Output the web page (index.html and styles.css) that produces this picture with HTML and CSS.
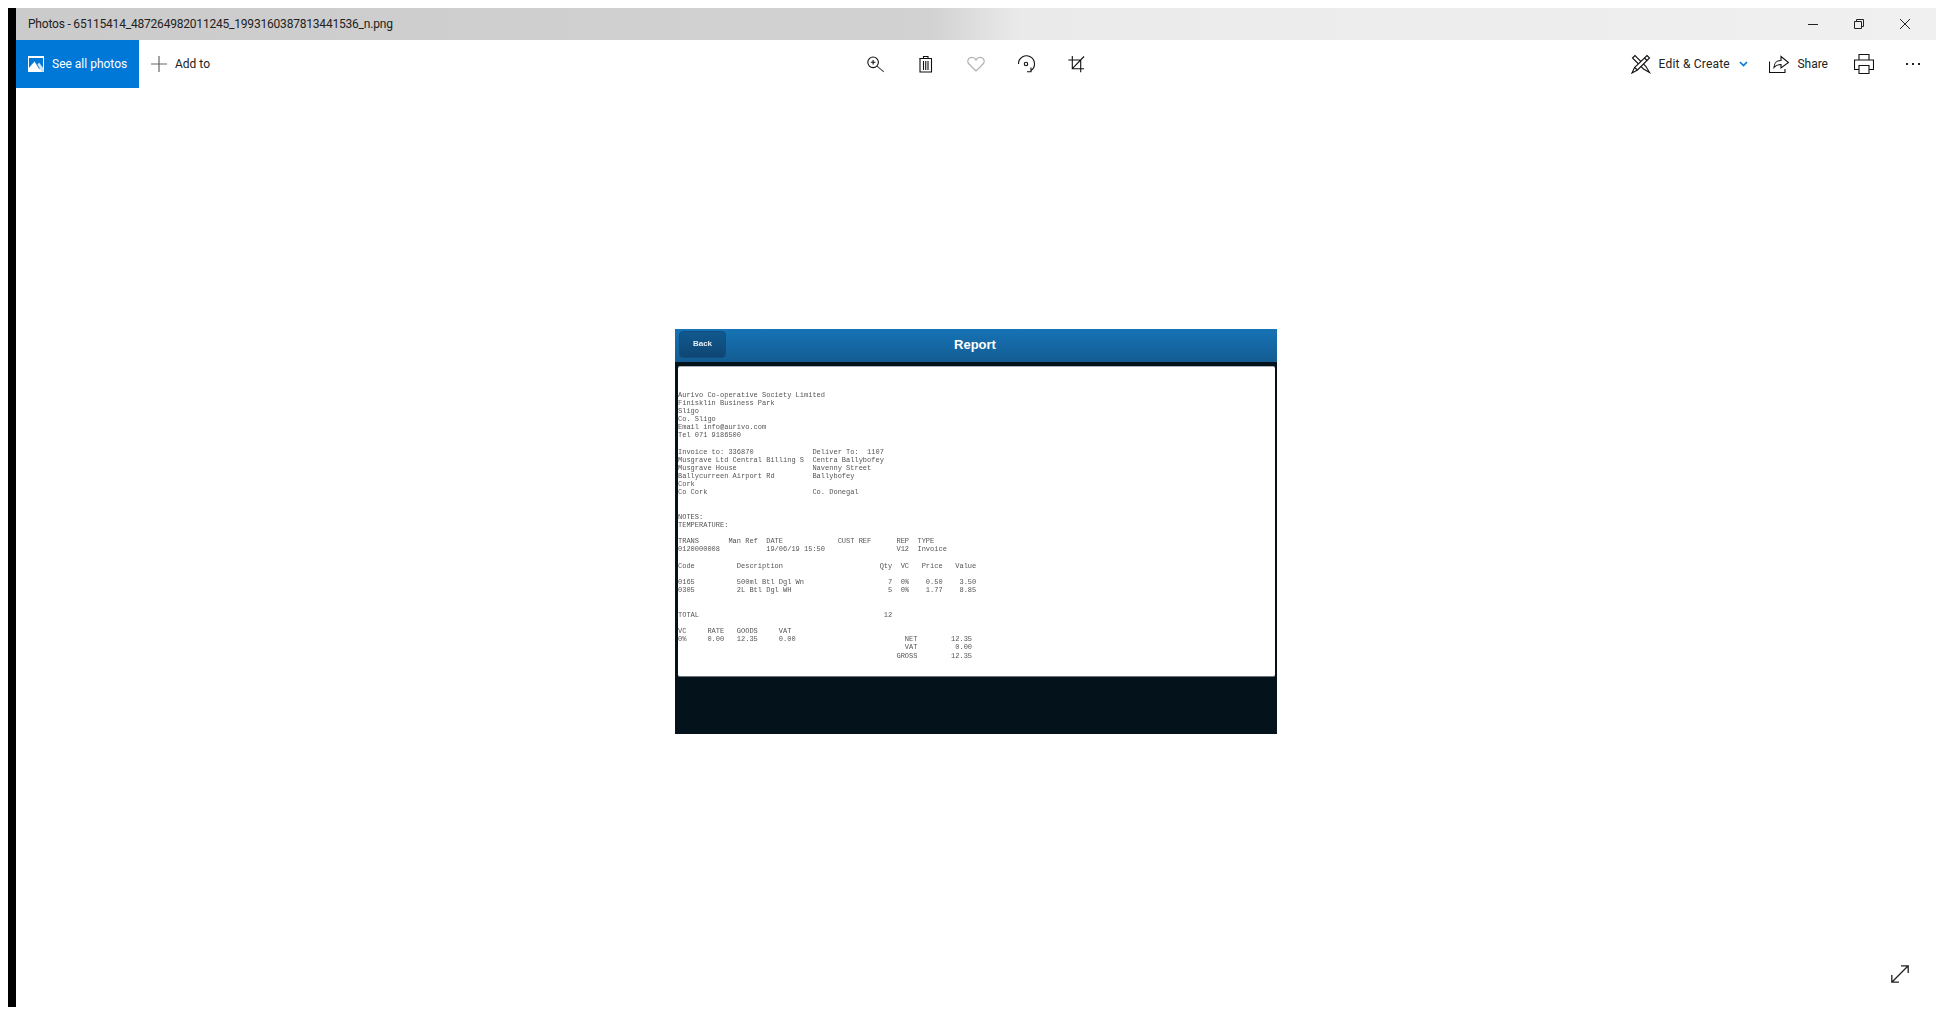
FILE: index.html
```html
<!DOCTYPE html>
<html lang="en">
<head>
<meta charset="utf-8">
<title>Photos</title>
<link rel="stylesheet" href="styles.css">
</head>
<body>
<div class="window">
  <header class="titlebar">
    <span class="title">Photos - 65115414_487264982011245_1993160387813441536_n.png</span>
    <div class="winctrls">
      <svg class="ic12" viewBox="0 0 12 12"><path d="M1 6.500h10" class="s1"/></svg>
      <svg class="ic12" viewBox="0 0 12 12"><path d="M1.500 3.500h7v7h-7zM3.500 3.500v-2h7v7h-2" class="s1"/></svg>
      <svg class="ic12" viewBox="0 0 12 12"><path d="M1 1l10 10M11 1L1 11" class="s1"/></svg>
    </div>
  </header>
  <nav class="toolbar">
    <div class="tb-left">
      <div class="see-all">
        <svg class="photo-ic" viewBox="0 0 16 16"><path d="M0 0h16v16H0z" fill="#fff"/><path d="M1 2h14v11H1z" fill="#0078d7"/><path d="M0 16v-3l6.500-7.500L13 16z" fill="#fff"/><path d="M9.500 8.500L11 6.500 16 13v3h-2.500z" fill="#cfe3f5"/></svg>
        <span>See all photos</span>
      </div>
      <div class="add-to">
        <svg class="ic16" viewBox="0 0 16 16"><path d="M0 8h16M8 0v16" stroke="#666" stroke-width="1.200" fill="none"/></svg>
        <span>Add to</span>
      </div>
    </div>
    <div class="tb-center">
      <svg class="ic20" viewBox="0 0 20 20"><circle cx="8.100" cy="8.300" r="5.300" class="s2"/><path d="M5.800 8.300h4.600M8.100 6v4.600" class="s2"/><path d="M12 12.200L18.800 17.800" stroke="#444" stroke-width="1.100" fill="none"/></svg>
      <svg class="ic20" viewBox="0 0 20 20"><path d="M4 5V18H15.500V5M3.300 4.500H16M7.500 4.500V2.500H12V4.500M7.500 7V16M9.750 7V16M12 7V16" class="s2"/></svg>
      <svg class="ic20" viewBox="0 0 20 20"><path d="M10 17L3 10C1 8 1.500 5 4 3.800C6.500 2.800 9 4 10 6C11 4 13.500 2.800 16 3.800C18.500 5 19 8 17 10Z" stroke="#b0b0b0" stroke-width="1.200" fill="none"/></svg>
      <svg class="ic20" viewBox="0 0 20 20"><path d="M2.500 10A8 8 0 1 1 15 16.500" class="s2"/><circle cx="10" cy="10" r="1.700" class="s2"/><path d="M11 17.800H15V13.500" class="s2"/></svg>
      <svg class="ic20" viewBox="0 0 20 20"><path d="M1.300 6H13.700V18.300M5.300 2V14.700H17M5.300 14.700L17 2.500" class="s2"/></svg>
    </div>
    <div class="tb-right">
      <div class="tool tool-edit">
        <svg class="ic20" viewBox="0 0 20 20"><path d="M1.500 4L4 1.500L15 12.500L18.500 18.500L12.500 15Z" class="s2"/><path d="M16 1.500L18.500 4L6.500 16L1 19L3.500 13.500Z" class="s2 fill-w"/><path d="M3.500 13.500L6.500 16M13.500 4L16 6.500" class="s2"/></svg>
        <span class="edit-label">Edit &amp; Create</span>
        <svg class="chev" viewBox="0 0 9 6"><path d="M1 1l3.500 3.500L8 1" stroke="#0078d7" stroke-width="1.600" fill="none"/></svg>
      </div>
      <div class="tool tool-share">
        <svg class="ic20" viewBox="0 0 20 20"><path d="M.5 7.500V18.500H16V15M5 13.500C5 9 8 6.500 12 6.500V2.500L19.500 8.500L12 14V10.500C9 10.500 6.500 11.500 5 13.500Z" class="s2"/></svg>
        <span>Share</span>
      </div>
      <svg class="ic20 printer" viewBox="0 0 20 20"><path d="M5 6V.5H15V6M5 15.500H.5V6H19.500V15.500H15M5 11.500H15V19.500H5Z" class="s2"/></svg>
      <div class="dots"><i></i><i></i><i></i></div>
    </div>
  </nav>
  <main class="stage">
    <figure class="shot">
      <div class="shot-head">
        <span class="back">Back</span>
        <span class="report">Report</span>
      </div>
      <pre class="sheet">Aurivo Co-operative Society Limited
Finisklin Business Park
Sligo
Co. Sligo
Email info@aurivo.com
Tel 071 9186500

Invoice to: 336870              Deliver To:  1107
Musgrave Ltd Central Billing S  Centra Ballybofey
Musgrave House                  Navenny Street
Ballycurreen Airport Rd         Ballybofey
Cork
Co Cork                         Co. Donegal


NOTES:
TEMPERATURE:

TRANS       Man Ref  DATE             CUST REF      REP  TYPE
0120000008           19/06/19 15:50                 V12  Invoice

Code          Description                       Qty  VC   Price   Value

0165          500ml Btl Dgl Wn                    7  0%    0.50    3.50
0305          2L Btl Dgl WH                       5  0%    1.77    8.85


TOTAL                                            12

VC     RATE   GOODS     VAT
0%     0.00   12.35     0.00                          NET        12.35
                                                      VAT         0.00
                                                    GROSS        12.35</pre>
    </figure>
    <svg class="expand" viewBox="0 0 18 18"><path d="M.8 17.200L17.200 .8M10 .8h7.200V8M.8 10v7.200H8" stroke="#222" stroke-width="1.300" fill="none"/></svg>
  </main>
</div>
</body>
</html>
```

FILE: styles.css
```css
* { box-sizing: border-box; }
html, body { height: 100%; }
body {
  margin: 0;
  padding: 8px 0 8px 8px;
  background: #fff;
  font-family: Roboto, "Noto Sans", sans-serif;
  overflow: hidden;
}
.window {
  height: 100%;
  border-left: 8px solid #000;
  display: flex;
  flex-direction: column;
  background: #fff;
}
.titlebar {
  height: 32px;
  flex: none;
  display: flex;
  align-items: center;
  justify-content: space-between;
  padding-left: 12px;
  background: linear-gradient(90deg, #cbcbcb 0, #d2d2d2 47.700%, #eaeaea 52.300%, #f0f0f0 100%);
}
.title { font-size: 12px; color: #222; letter-spacing: -0.2px; }
.winctrls { display: flex; gap: 34px; padding-right: 25px; }
.ic12 { width: 12px; height: 12px; display: block; }
.s1 { stroke: #222; stroke-width: 1; fill: none; }
.s2 { stroke: #111; stroke-width: 1.100; fill: none; }
.s2.fill-w { fill: #fff; }
.toolbar {
  height: 48px;
  flex: none;
  display: grid;
  grid-template-columns: 1fr auto 1fr;
  align-items: center;
}
.tb-left { display: flex; align-items: center; height: 100%; }
.see-all {
  width: 123px;
  height: 100%;
  background: #0078d7;
  color: #fff;
  display: flex;
  align-items: center;
  gap: 8px;
  padding-left: 12px;
  font-size: 12px;
  white-space: nowrap;
}
.photo-ic { width: 16px; height: 16px; }
.add-to {
  display: flex;
  align-items: center;
  gap: 8px;
  margin-left: 12px;
  font-size: 12px;
  color: #222;
}
.ic16 { width: 16px; height: 16px; }
.ic20 { width: 20px; height: 20px; flex: none; display: block; }
.tb-center { display: flex; gap: 30.400px; }
.tb-right { display: flex; align-items: center; justify-content: flex-end; padding-right: 16px; font-size: 12px; color: #222; }
.tool { display: flex; align-items: center; gap: 8px; white-space: nowrap; }
.tool-edit { margin-right: 21.500px; }
.tool-share { margin-right: 26px; }
.edit-label { letter-spacing: 0.2px; }
.chev { width: 9px; height: 6px; margin-left: 1px; }
.dots { display: flex; gap: 4px; margin-left: 32px; }
.dots i { width: 2px; height: 2px; background: #222; display: block; }
.stage {
  flex: 1;
  position: relative;
  display: flex;
  align-items: center;
  justify-content: center;
  padding-bottom: 33px;
}
.shot {
  margin: 0;
  width: 602px;
  height: 405px;
  background: #03121b;
  display: flex;
  flex-direction: column;
}
.shot-head {
  height: 33px;
  flex: none;
  position: relative;
  display: flex;
  align-items: center;
  justify-content: center;
  padding-bottom: 2px;
  background: linear-gradient(#1673b5, #145c93);
}
.back {
  position: absolute;
  left: 4px;
  top: 2px;
  width: 47px;
  height: 27px;
  display: flex;
  align-items: center;
  justify-content: center;
  padding-bottom: 1px;
  border: 1px solid #0f4f80;
  border-radius: 4px;
  background: linear-gradient(#11598f, #0f4673);
  color: #e6eef5;
  font: bold 8px "Liberation Sans", sans-serif;
  filter: blur(0.3px);
}
.report {
  color: #fff;
  font: bold 13px "Liberation Sans", sans-serif;
  margin-left: -2px;
}
.sheet {
  margin: 4px 2px 0 3px;
  height: 311px;
  padding: 24px 0 0;
  background: #fff;
  border-radius: 2px;
  border-top: 1px solid #b0b4b8;
  border-bottom: 1px solid #6d7378;
  font: 7px/8.150px "Liberation Mono", monospace;
  color: #555;
  overflow: hidden;
  filter: blur(0.4px);
}
.expand {
  position: absolute;
  right: 27px;
  bottom: 24px;
  width: 18px;
  height: 18px;
}
```
